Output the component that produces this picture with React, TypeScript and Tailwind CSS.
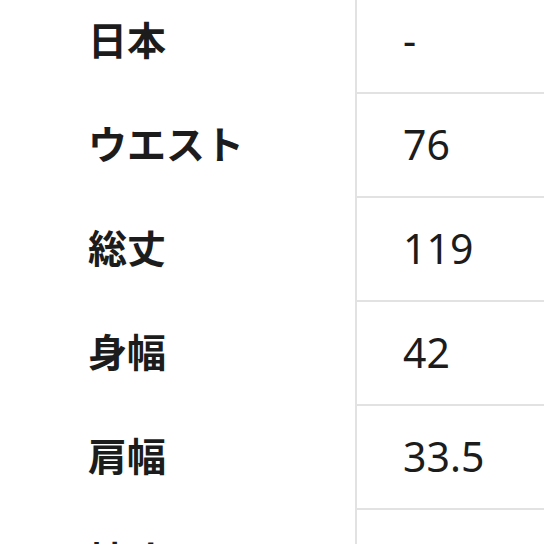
const rows = [
  { label: '日本', value: '-' },
  { label: 'ウエスト', value: '76' },
  { label: '総丈', value: '119' },
  { label: '身幅', value: '42' },
  { label: '肩幅', value: '33.5' },
  { label: '袖丈', value: '58' },
];

export default function App() {
  return (
    <div className="h-[544px] w-[544px] overflow-hidden bg-white">
      <div className="-mt-[10px] flex flex-col">
        {rows.map((row) => (
          <div key={row.label} className="flex h-[104px]">
            <div
              className="flex w-[355px] items-center pb-[8px] pl-[88px] text-[39px] font-bold text-[#1c1c1c]"
              style={{ fontFamily: '"Noto Sans CJK JP", "Noto Sans", sans-serif' }}
            >
              {row.label}
            </div>
            <div
              className="flex flex-1 items-center border-b-2 border-l-2 border-[#e2e2e2] pl-[46px] text-[41px] text-[#1c1c1c]"
              style={{ fontFamily: '"Noto Sans", "Noto Sans CJK JP", sans-serif' }}
            >
              {row.value}
            </div>
          </div>
        ))}
      </div>
    </div>
  );
}
